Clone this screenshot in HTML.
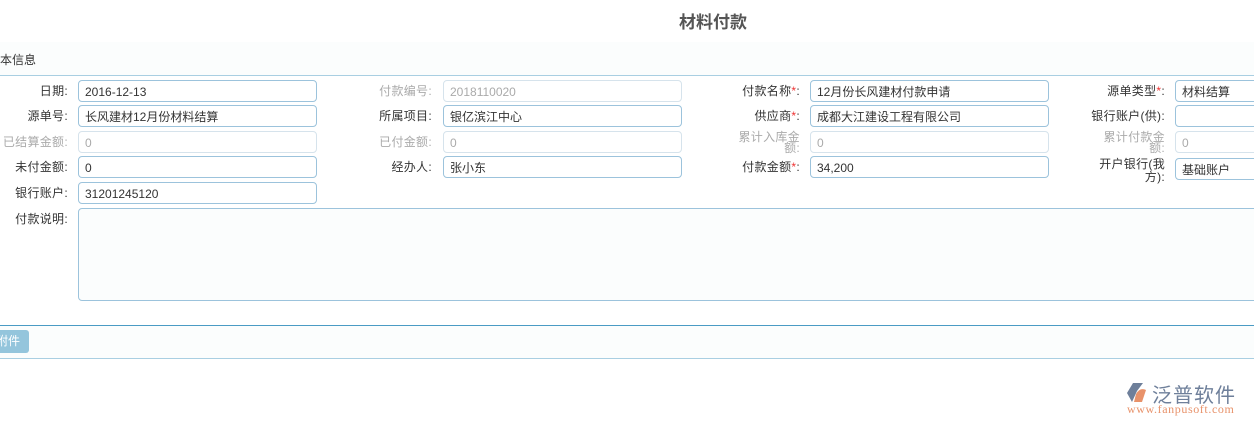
<!DOCTYPE html><html><head><meta charset="utf-8"><style>
body{margin:0;width:1254px;height:426px;background:#fff;position:relative;overflow:hidden;font-family:"Liberation Sans","Noto Sans CJK SC",sans-serif;font-size:12px;color:#333}
.a{position:absolute}
.t{left:0;width:1426px;top:8px;text-align:center;font-size:17px;font-weight:bold;color:#555}
.l{text-align:right;line-height:14px;white-space:nowrap;letter-spacing:0.3px}
.i{border:1px solid #9cc3dc;border-radius:4px;height:22px;line-height:22px;padding-left:6px;box-sizing:border-box;background:#fff;white-space:nowrap;overflow:hidden}
.d{border-color:#d6e3ec;color:#aaa}
.g{color:#aaa}
.r{color:#e33}
</style></head><body>
<div class="a t">材料付款</div>
<div class="a" style="left:0;top:42px;width:1254px;height:33px;background:#fbfdfd;border-bottom:1px solid #a9cfe2"></div>
<div class="a" style="left:0;top:51px">本信息</div>
<div class="a l" style="right:1186px;top:84px">日期:</div>
<div class="a i" style="left:78px;top:80px;width:239px">2016-12-13</div>
<div class="a l g" style="right:822px;top:84px">付款编号:</div>
<div class="a i d" style="left:443px;top:80px;width:239px">2018110020</div>
<div class="a l" style="right:454px;top:84px">付款名称<span class="r">*</span>:</div>
<div class="a i" style="left:810px;top:80px;width:239px">12月份长风建材付款申请</div>
<div class="a l" style="right:89px;top:84px">源单类型<span class="r">*</span>:</div>
<div class="a i" style="left:1175px;top:80px;width:100px">材料结算</div>
<div class="a l" style="right:1186px;top:109px">源单号:</div>
<div class="a i" style="left:78px;top:105px;width:239px">长风建材12月份材料结算</div>
<div class="a l" style="right:822px;top:109px">所属项目:</div>
<div class="a i" style="left:443px;top:105px;width:239px">银亿滨江中心</div>
<div class="a l" style="right:454px;top:109px">供应商<span class="r">*</span>:</div>
<div class="a i" style="left:810px;top:105px;width:239px">成都大江建设工程有限公司</div>
<div class="a l" style="right:89px;top:109px">银行账户(供):</div>
<div class="a i" style="left:1175px;top:105px;width:100px"></div>
<div class="a l g" style="right:1186px;top:135px">已结算金额:</div>
<div class="a i d" style="left:78px;top:131px;width:239px">0</div>
<div class="a l g" style="right:822px;top:135px">已付金额:</div>
<div class="a i d" style="left:443px;top:131px;width:239px">0</div>
<div class="a l g" style="right:454px;top:132px;line-height:11px">累计入库金<br>额:</div>
<div class="a i d" style="left:810px;top:131px;width:239px">0</div>
<div class="a l g" style="right:89px;top:132px;line-height:11px">累计付款金<br>额:</div>
<div class="a i d" style="left:1175px;top:131px;width:100px">0</div>
<div class="a l" style="right:1186px;top:160px">未付金额:</div>
<div class="a i" style="left:78px;top:156px;width:239px">0</div>
<div class="a l" style="right:822px;top:160px">经办人:</div>
<div class="a i" style="left:443px;top:156px;width:239px">张小东</div>
<div class="a l" style="right:454px;top:160px">付款金额<span class="r">*</span>:</div>
<div class="a i" style="left:810px;top:156px;width:239px">34,200</div>
<div class="a l" style="right:89px;top:158px;line-height:13px">开户银行(我<br>方):</div>
<div class="a i" style="left:1175px;top:158px;width:100px">基础账户</div>
<div class="a l" style="right:1186px;top:186px">银行账户:</div>
<div class="a i" style="left:78px;top:182px;width:239px">31201245120</div>
<div class="a l" style="right:1186px;top:212px">付款说明:</div>
<div class="a i" style="left:78px;top:208px;width:1200px;height:93px;background:#fbfdfd"></div>
<div class="a" style="left:0;top:325px;width:1254px;height:32px;border-top:1px solid #4a9bc4;border-bottom:1px solid #a9cfe2;background:#fbfdfd"></div>
<div class="a" style="left:-4px;top:330px;width:33px;height:23px;background:#94c5dc;border-radius:3px;color:#fff;line-height:23px;text-align:right;box-sizing:border-box;font-size:12px"><span style="margin-right:9px">附件</span></div>
<svg class="a" style="left:1124px;top:382px" width="30" height="22" viewBox="0 0 30 22"><path d="M9 1 L19 1 L13 9 L8 20 L3 11 Z" fill="#6e7f9a"/><path d="M12 12 Q16 5 22 8 L18 20 L10 20 Z" fill="#e8926a"/></svg>
<div class="a" style="left:1152px;top:379px;font-size:20px;color:#6e7f9a;letter-spacing:1px">泛普软件</div>
<div class="a" style="left:1127px;top:402px;font-size:12px;color:#e8926a;font-family:'Liberation Serif',serif;letter-spacing:0.6px">www.fanpusoft.com</div>
</body></html>
